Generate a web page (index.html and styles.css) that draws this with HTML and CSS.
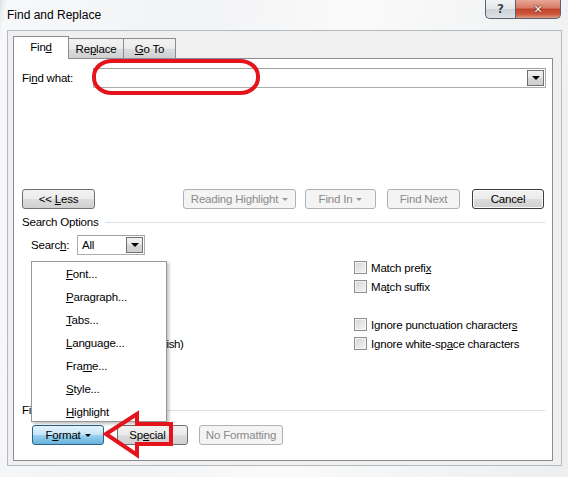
FILE: index.html
```html
<!DOCTYPE html>
<html>
<head>
<meta charset="utf-8">
<title>Find and Replace</title>
<link rel="stylesheet" href="styles.css">
</head>
<body>
<div class="window">
  <div class="titlebar">
    <div class="title">Find and Replace</div>
    <div class="caption">
      <div class="cap-btn help">?</div>
      <div class="cap-btn close">✕</div>
    </div>
  </div>
  <div class="client">
    <div class="tabs">
      <div class="tab active"><span>Fin<u>d</u></span></div>
      <div class="tab"><span>Re<u>p</u>lace</span></div>
      <div class="tab tab-goto"><span><u>G</u>o To</span></div>
    </div>
    <div class="panel">
      <div class="row find-row">
        <label class="find-label">Fi<u>n</u>d what:</label>
        <div class="combo wide">
          <div class="combo-text"></div>
          <div class="drop"><span class="tri"></span></div>
        </div>
      </div>

      <div class="row btn-row">
        <div class="btn less"><span>&lt;&lt; <u>L</u>ess</span></div>
        <div class="spacer"></div>
        <div class="btn disabled rh"><span>Reading Highlight</span><span class="tri small"></span></div>
        <div class="btn disabled fi"><span>Find In</span><span class="tri small"></span></div>
        <div class="btn disabled fn"><span>Find Next</span></div>
        <div class="btn default cancel"><span>Cancel</span></div>
      </div>

      <div class="group-head"><span>Search Options</span><span class="rule"></span></div>

      <div class="row search-row">
        <label class="search-label">Searc<u>h</u>:</label>
        <div class="combo small-combo">
          <div class="combo-text">All</div>
          <div class="drop"><span class="tri"></span></div>
        </div>
      </div>

      <div class="options">
        <div class="opt left"><span class="cb"></span><span>Matc<u>h</u> case</span></div>
        <div class="opt"><span class="cb"></span><span>Match prefi<u>x</u></span></div>
        <div class="opt left"><span class="cb"></span><span>Find wh<u>o</u>le words only</span></div>
        <div class="opt"><span class="cb"></span><span>Ma<u>t</u>ch suffix</span></div>
        <div class="opt left"><span class="cb"></span><span><u>U</u>se wildcards</span></div>
        <div class="opt"></div>
        <div class="opt left"><span class="cb"></span><span>Sounds li<u>k</u>e (English)</span></div>
        <div class="opt"><span class="cb"></span><span>Ignore punctuation character<u>s</u></span></div>
        <div class="opt left"><span class="cb"></span><span>Find all <u>w</u>ord forms (English)</span></div>
        <div class="opt"><span class="cb"></span><span>Ignore white-sp<u>a</u>ce characters</span></div>
      </div>

      <div class="group-head find-head"><span>Find</span><span class="rule"></span></div>

      <div class="row bottom-row">
        <div class="btn pressed format"><span>F<u>o</u>rmat</span><span class="tri small dark"></span></div>
        <div class="btn special"><span>Sp<u>e</u>cial</span></div>
        <div class="btn disabled nofmt"><span>No Formatting</span></div>
      </div>
    </div>
  </div>
</div>

<div class="menu">
  <div class="mi"><u>F</u>ont...</div>
  <div class="mi"><u>P</u>aragraph...</div>
  <div class="mi"><u>T</u>abs...</div>
  <div class="mi"><u>L</u>anguage...</div>
  <div class="mi">Fra<u>m</u>e...</div>
  <div class="mi"><u>S</u>tyle...</div>
  <div class="mi last"><u>H</u>ighlight</div>
</div>

<svg class="marks" width="568" height="477" viewBox="0 0 568 477">
  <rect x="94" y="61" width="164" height="32" rx="18" ry="15" fill="none" stroke="#e5141c" stroke-width="4"/>
  <polygon points="106,434 137,414 137,424 171,424 171,444 137,444 137,455" fill="none" stroke="#e5141c" stroke-width="4" stroke-linejoin="miter"/>
</svg>
</body>
</html>
```
FILE: styles.css
```css
* { box-sizing: border-box; }
html, body { margin: 0; padding: 0; }
body {
  width: 568px;
  height: 477px;
  overflow: hidden;
  position: relative;
  font-family: "Segoe UI", "Liberation Sans", Arial, sans-serif;
  font-size: 11.5px;
  letter-spacing: -0.2px;
  color: #000;
  background: linear-gradient(100deg, #dcdfe3 0px, #eef0f2 4px, #f7f8f9 8px, #f2f3f5 30%, #fafafa 55%, #eceef0 100%);
}
u { text-decoration: underline; text-underline-offset: 1px; }

.window { width: 568px; height: 477px; display: flex; flex-direction: column; }

.titlebar {
  height: 30px;
  display: flex;
  justify-content: space-between;
  align-items: flex-start;
  flex: none;
}
.title { padding: 8px 0 0 7px; line-height: 15px; font-size: 12px; letter-spacing: 0; }
.caption { display: flex; margin-right: 7px; }
.cap-btn {
  height: 19px;
  display: flex;
  align-items: center;
  justify-content: center;
  border: 1px solid #5a6270;
  border-top: none;
  font-weight: bold;
  font-family: "DejaVu Sans", sans-serif;
  letter-spacing: 0;
}
.help {
  width: 30px;
  border-radius: 0 0 0 5px;
  border-right: none;
  background: linear-gradient(#f2f3f5, #e2e5e9 50%, #cdd2d8 51%, #dde1e6);
  color: #3c4452;
  font-size: 12px;
  text-shadow: 0 0 2px #fff;
}
.close {
  width: 46px;
  border-radius: 0 0 5px 0;
  background: linear-gradient(#e8a797, #d77a66 45%, #c2412a 50%, #cd5a40 80%, #e39a82);
  color: #fff;
  font-size: 11px;
  text-shadow: 0 0 2px #4a1008, 0 0 1px #4a1008;
}

.client {
  flex: none;
  margin: 0 6px 0 7px;
  height: 436px;
  background: #f0f0f0;
  border: 1px solid #b4bac1;
  padding: 5px 7px 0 5px;
  display: flex;
  flex-direction: column;
}

.tabs { display: flex; align-items: flex-end; height: 22px; position: relative; z-index: 2; }
.tab {
  height: 20px;
  border: 1px solid #898c95;
  border-bottom: none;
  border-left: none;
  background: linear-gradient(#f3f3f3, #ebebeb 50%, #dddddd 51%, #cfcfcf);
  display: flex;
  align-items: center;
  justify-content: center;
  width: 55px;
  padding-top: 1px;
}
.tab.active {
  height: 23px;
  width: 56px;
  border-left: 1px solid #898c95;
  background: #fff;
  margin-bottom: -1px;
  padding-top: 0;
  padding-bottom: 2px;
}
.tab-goto { width: 52px; }

.panel {
  width: 540px;
  height: 403px;
  background: #fff;
  border: 1px solid #898c95;
  padding: 0 6px 0 8px;
  display: flex;
  flex-direction: column;
}

.row { display: flex; align-items: center; }
.find-row { margin-top: 9px; height: 20px; }
.find-label { width: 71px; }
.combo {
  height: 20px;
  border: 1px solid #abadb3;
  border-top-color: #a0a0a0;
  background: #fff;
  display: flex;
  align-items: stretch;
  padding: 1px;
}
.combo.wide { flex: 1; }
.combo-text { flex: 1; padding-left: 3px; line-height: 16px; }
.drop {
  width: 17px;
  border: 1px solid #707070;
  background: linear-gradient(#f2f2f2, #e4e4e4 50%, #d6d6d6 51%, #cfcfcf);
  display: flex;
  align-items: center;
  justify-content: center;
}
.tri {
  display: inline-block;
  width: 0; height: 0;
  border-left: 4px solid transparent;
  border-right: 4px solid transparent;
  border-top: 4px solid #000;
}
.tri.small {
  border-left-width: 3px;
  border-right-width: 3px;
  border-top: 3px solid #9a9a9a;
  margin-left: 4px;
}
.tri.small.dark { border-top-color: #000; }

.btn-row { margin-top: 101px; height: 20px; }
.spacer { flex: 1; }
.btn {
  height: 20px;
  border: 1px solid #707070;
  border-radius: 3px;
  background: linear-gradient(#f2f2f2, #ebebeb 50%, #dddddd 51%, #cfcfcf);
  display: flex;
  align-items: center;
  justify-content: center;
  white-space: nowrap;
  line-height: 14px;
}
.btn.disabled {
  border-color: #adb2b5;
  background: #f4f4f4;
  color: #8b8b8b;
}
.btn.default { border-color: #3c3c3c; box-shadow: inset 0 0 0 1px #f8f8f8; }
.btn.pressed {
  border-color: #2c628b;
  background: linear-gradient(#e5f4fc, #c4e5f6 50%, #98d1ef 51%, #68b3db);
}
.less { width: 73px; }
.rh { width: 113px; }
.fi { width: 71px; margin-left: 9px; }
.fn { width: 73px; margin-left: 11px; }
.cancel { width: 72px; margin-left: 12px; margin-right: 2px; }

.group-head {
  margin-top: 6px;
  height: 14px;
  line-height: 14px;
  display: flex;
  align-items: center;
}
.group-head .rule {
  flex: 1;
  height: 1px;
  background: #d5dfe5;
  margin-left: 7px;
  margin-right: 1px;
}

.search-row { margin-top: 6px; height: 20px; padding-left: 9px; }
.search-label { width: 46px; }
.small-combo { width: 68px; }

.options {
  margin-top: 3px;
  padding-left: 9px;
  display: grid;
  grid-template-columns: 323px 1fr;
  grid-auto-rows: 19px;
}
.opt { display: flex; align-items: center; white-space: nowrap; }
.opt.left { letter-spacing: -0.35px; }
.cb {
  width: 13px;
  height: 13px;
  border: 1px solid #8e8f8f;
  background: linear-gradient(135deg, #d4d4d4, #f6f6f6);
  box-shadow: inset 0 0 0 1px #f4f4f4;
  margin-right: 4px;
  flex: none;
}

.find-head { margin-top: 50px; }
.find-head .rule { margin-left: 5px; }

.bottom-row { margin-top: 8px; height: 20px; padding-left: 10px; }
.format { width: 72px; }
.special { width: 71px; margin-left: 13px; padding-right: 10px; }
.nofmt { width: 84px; margin-left: 11px; }

.menu {
  position: absolute;
  left: 31px;
  top: 261px;
  width: 136px;
  height: 161px;
  background: #fff;
  border: 1px solid #979797;
  box-shadow: 2px 2px 3px rgba(0,0,0,0.25);
  padding-top: 1px;
  overflow: hidden;
  z-index: 5;
}
.mi {
  height: 23px;
  line-height: 23px;
  padding-left: 34px;
}

.marks { position: absolute; left: 0; top: 0; pointer-events: none; z-index: 10; }
```
